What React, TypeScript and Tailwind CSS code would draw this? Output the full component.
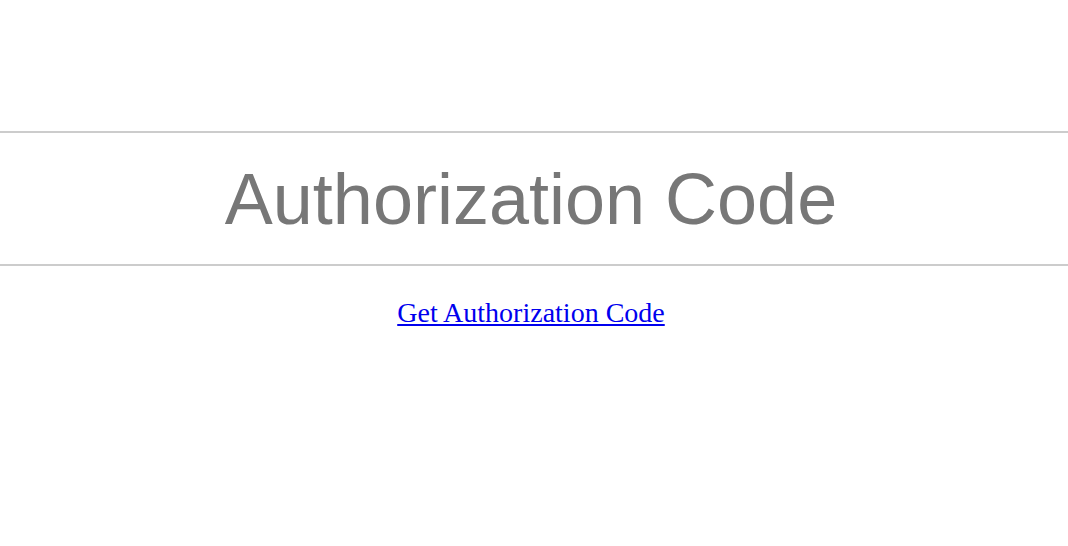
export default function App() {
  return (
    <div className="min-h-[546px] bg-white pt-[131px]">
      {/* Title band */}
      <div className="border-y-2 border-[#cccccc] h-[135px] flex items-center justify-center pr-[6px]">
        <h1 className="text-[72px] leading-none text-[#777777] font-['Liberation_Sans',Arial,sans-serif]">
          Authorization Code
        </h1>
      </div>

      {/* Link */}
      <div className="pt-[33px] pr-[6px] text-center">
        <a
          href="#"
          className="text-[28px] leading-none text-[#0000ee] underline font-['Liberation_Serif','Times_New_Roman',serif]"
        >
          Get Authorization Code
        </a>
      </div>
    </div>
  );
}
